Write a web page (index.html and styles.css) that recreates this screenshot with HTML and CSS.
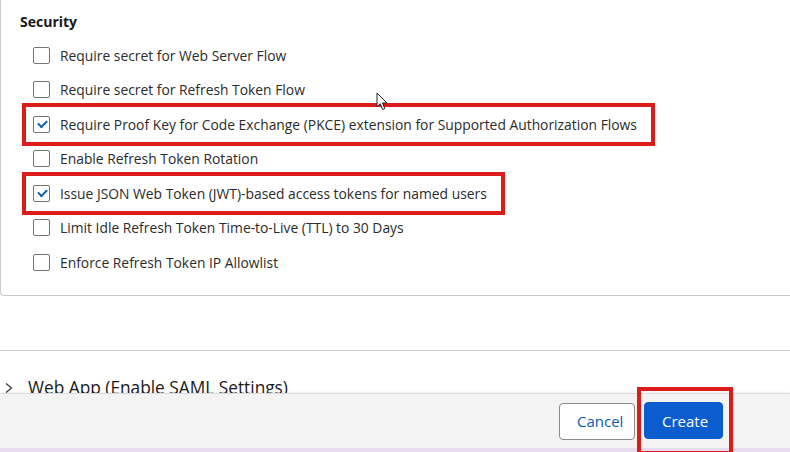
FILE: index.html
```html
<!DOCTYPE html>
<html lang="en">
<head>
    <meta charset="UTF-8">
    <meta name="viewport" content="width=device-width, initial-scale=1.0">
    <title>New Connected App</title>
    <link rel="stylesheet" href="styles.css">
</head>
<body>
    <div class="page">
        <div class="scroll-area">
            <section class="card">
                <h2 class="card-title">Security</h2>
                <ul class="options">
                    <li class="option"><span class="box"></span>Require secret for Web Server Flow</li>
                    <li class="option"><span class="box"></span>Require secret for Refresh Token Flow</li>
                    <li class="option marked"><span class="box checked"></span>Require Proof Key for Code Exchange (PKCE) extension for Supported Authorization Flows</li>
                    <li class="option"><span class="box"></span>Enable Refresh Token Rotation</li>
                    <li class="option marked"><span class="box checked"></span>Issue JSON Web Token (JWT)-based access tokens for named users</li>
                    <li class="option"><span class="box"></span>Limit Idle Refresh Token Time-to-Live (TTL) to 30 Days</li>
                    <li class="option"><span class="box"></span>Enforce Refresh Token IP Allowlist</li>
                </ul>
            </section>

            <div class="accordion">
                <div class="accordion-head">
                    <svg class="chevron" viewBox="0 0 10 12" width="10" height="12"><path d="M2 1.5 L7.5 6 L2 10.5" fill="none" stroke="#444" stroke-width="1.4"/></svg>
                    <span>Web App (Enable SAML Settings)</span>
                </div>
            </div>
        </div>

        <footer class="actions">
            <button class="btn btn-neutral">Cancel</button>
            <div class="marked-btn">
                <button class="btn btn-brand">Create</button>
            </div>
        </footer>

        <svg class="cursor" viewBox="0 0 12 19" width="12" height="19">
            <path d="M1 1 L1 15 L4.3 11.8 L6.6 17.5 L8.8 16.6 L6.5 11 L11 11 Z" fill="#fff" stroke="#222" stroke-width="1"/>
        </svg>
    </div>
</body>
</html>
```

FILE: styles.css
```css
body {
    margin: 0;
    padding: 0;
    font-family: 'Open Sans', 'Noto Sans', sans-serif;
    color: #222222;
    background-color: #ffffff;
    overflow: hidden;
}

.page {
    position: relative;
    width: 790px;
    height: 452px;
    overflow: hidden;
}

.scroll-area {
    height: 393px;
    overflow: hidden;
}

.card {
    border-left: 1px solid #c9c9c9;
    border-bottom: 1px solid #c9c9c9;
    border-bottom-left-radius: 4px;
    padding: 12px 0 15px 0;
    margin-right: -10px;
}

.card-title {
    margin: 0 0 6px 19px;
    font-size: 14px;
    line-height: 20px;
    font-weight: 700;
    color: #181818;
}

.options {
    list-style: none;
    margin: 0;
    padding: 0 0 0 25px;
}

.option {
    display: flex;
    align-items: center;
    width: fit-content;
    height: 34.5px;
    box-sizing: border-box;
    padding: 0 14px 0 7px;
    font-size: 13.85px;
    color: #2b2b2b;
    white-space: nowrap;
}

.option.marked {
    outline: 4px solid #de1b1b;
}

.box {
    flex: none;
    width: 17px;
    height: 17px;
    box-sizing: border-box;
    border: 1px solid #747474;
    border-radius: 2px;
    margin-right: 10px;
    background-color: #ffffff;
    position: relative;
}

.box.checked::after {
    content: '';
    position: absolute;
    left: 4px;
    top: 3px;
    width: 7px;
    height: 4px;
    border-left: 2px solid #0b5cab;
    border-bottom: 2px solid #0b5cab;
    transform: rotate(-45deg);
}

.accordion {
    margin-top: 54px;
    border-top: 1px solid #c9c9c9;
    padding-top: 26px;
}

.accordion-head {
    display: flex;
    align-items: center;
    gap: 14px;
    padding-left: 4px;
    font-size: 17.3px;
    line-height: 22px;
    color: #181818;
}

.actions {
    display: flex;
    align-items: center;
    justify-content: flex-end;
    height: 54px;
    padding-right: 57px;
    background-color: #f3f3f3;
    border-top: 1px solid #dddbda;
    border-bottom: 4px solid #e6dced;
    box-shadow: 0 -1px 2px rgba(0, 0, 0, 0.05);
}

.btn {
    font-family: inherit;
    font-size: 15px;
    height: 37px;
    padding: 0 17px;
    border-radius: 4px;
    cursor: pointer;
}

.btn-neutral {
    background-color: #ffffff;
    border: 1px solid #8a8a8a;
    color: #0b5cab;
    width: 76px;
}

.btn-brand {
    background-color: #0b5ccf;
    border: 1px solid #0b5ccf;
    color: #ffffff;
    width: 79px;
}

.marked-btn {
    margin-left: 2px;
    padding: 11px 6px 12px 3px;
    border: 4px solid #de1b1b;
    line-height: 0;
}

.cursor {
    position: absolute;
    left: 376px;
    top: 92px;
}
```
